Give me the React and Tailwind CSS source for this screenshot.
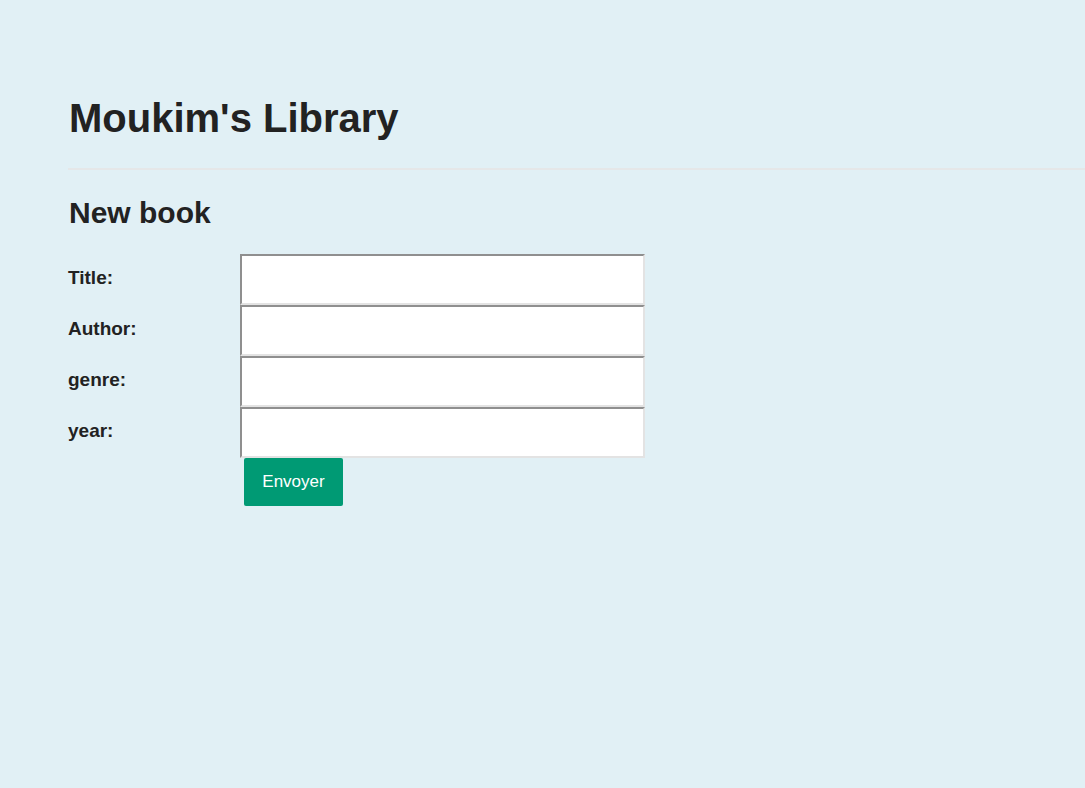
import React from "react";

const fields = ["Title:", "Author:", "genre:", "year:"];

export default function App() {
  return (
    <div className="min-h-[788px] w-full bg-[#e1f0f5] text-[#222] font-['Liberation_Sans',Arial,sans-serif]">
      <div className="pl-[68px] pt-[95px]">
        {/* Header */}
        <h1 className="text-[40px] font-bold leading-[46px] pl-px">Moukim's Library</h1>
        <hr className="mt-[27px] border-0 h-[2px] bg-[#e5e7e8]" />

        {/* Form */}
        <h2 className="mt-[26px] text-[30px] font-bold leading-[34px] pl-px">New book</h2>
        <form className="mt-[24px]" onSubmit={(e) => e.preventDefault()}>
          {fields.map((label) => (
            <div key={label} className="flex items-center">
              <label className="w-[172px] text-[19px] font-bold leading-[22px] pb-[3px]">{label}</label>
              <input
                type="text"
                className="w-[405px] h-[51px] bg-white border-2 border-t-[#8f8f8f] border-l-[#8f8f8f] border-b-[#e3e3e3] border-r-[#e3e3e3] outline-none"
              />
            </div>
          ))}
          <div className="pl-[176px]">
            <button
              type="submit"
              className="w-[99px] h-[48px] bg-[#009a74] text-white text-[17px] rounded-[2px]"
            >
              Envoyer
            </button>
          </div>
        </form>
      </div>
    </div>
  );
}
